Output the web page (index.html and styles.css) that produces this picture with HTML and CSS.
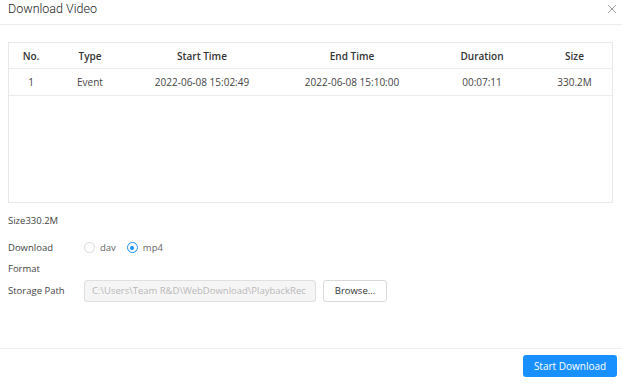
FILE: index.html
```html
<!DOCTYPE html>
<html>
<head>
<meta charset="utf-8">
<link rel="stylesheet" href="styles.css">
</head>
<body>
<div class="dialog">
  <div class="header">
    <span class="title">Download Video</span>
    <svg class="close" width="10" height="10" viewBox="0 0 10 10"><path d="M1 1L9 9M9 1L1 9" stroke="#a0a0a0" stroke-width="1" fill="none"/></svg>
  </div>
  <div class="body">
    <div class="table">
      <div class="row head">
        <div>No.</div><div>Type</div><div>Start Time</div><div>End Time</div><div>Duration</div><div>Size</div>
      </div>
      <div class="row data">
        <div>1</div><div>Event</div><div>2022-06-08 15:02:49</div><div>2022-06-08 15:10:00</div><div>00:07:11</div><div>330.2M</div>
      </div>
    </div>
    <div class="size">Size330.2M</div>
    <div class="form">
      <div class="label">Download Format</div>
      <div class="radios">
        <label class="radio"><span class="dot"></span>dav</label>
        <label class="radio on"><span class="dot"></span>mp4</label>
      </div>
      <div class="label single">Storage Path</div>
      <div class="pathrow">
        <div class="input">C:\Users\Team R&amp;D\WebDownload\PlaybackRec</div>
        <div class="btn">Browse...</div>
      </div>
    </div>
  </div>
  <div class="footer">
    <div class="primary">Start Download</div>
  </div>
</div>
</body>
</html>
```
FILE: styles.css
```css
html, body { margin: 0; padding: 0; background: #fff; }
body { font-family: "Open Sans", "Noto Sans", sans-serif; color: #333; }
.dialog { width: 622px; height: 390px; display: flex; flex-direction: column; }
.header { height: 25px; border-bottom: 1px solid #ececec; display: flex; justify-content: space-between; align-items: flex-start; padding: 0 8px; box-sizing: border-box; }
.title { font-family: Roboto, sans-serif; font-weight: 300; font-size: 12.5px; color: #222; line-height: 17px; }
.close { margin-top: 4px; margin-right: -3px; }
.body { padding: 17px 9px 0 8px; flex: 1; }
.table { border: 1px solid #e8e8e8; height: 159px; font-size: 10px; }
.row { display: grid; grid-template-columns: 44px 74px 150px 150px 110px 1fr; text-align: center; border-bottom: 1px solid #ececec; align-items: center; }
.row.head { height: 25px; font-weight: 600; color: #333; }
.row.data { height: 26px; color: #444; }
.size { font-size: 9.5px; color: #444; margin-top: 12px; line-height: 12px; }
.form { display: grid; grid-template-columns: 76px 1fr; margin-top: 10px; font-size: 9.5px; color: #444; }
.label { width: 56px; line-height: 21px; }
.label.single { width: 76px; line-height: 22px; margin-top: 1px; }
.radios { display: flex; gap: 11px; height: 21px; align-items: center; align-self: start; }
.radio { display: flex; align-items: center; gap: 5px; color: #666; }
.dot { width: 11px; height: 11px; border: 1px solid #d9d9d9; border-radius: 50%; box-sizing: border-box; display: inline-block; position: relative; }
.radio.on .dot { border-color: #1890ff; }
.radio.on .dot::after { content: ""; position: absolute; left: 2.5px; top: 2.5px; width: 4px; height: 4px; border-radius: 50%; background: #1890ff; }
.pathrow { display: flex; gap: 7px; align-items: center; margin-top: 1px; }
.input { width: 232px; height: 22px; box-sizing: border-box; border: 1px solid #e0e0e0; border-radius: 3px; background: #f5f5f5; color: #b8b8b8; padding-left: 7px; line-height: 20px; white-space: nowrap; overflow: hidden; }
.btn { width: 64px; height: 22px; box-sizing: border-box; border: 1px solid #d9d9d9; border-radius: 3px; text-align: center; line-height: 20px; color: #333; }
.footer { border-top: 1px solid #efefef; height: 42px; display: flex; justify-content: flex-end; align-items: flex-start; padding: 6px 5px 0 0; box-sizing: border-box; }
.primary { width: 94px; height: 22px; background: #1890ff; color: #fff; border-radius: 3px; text-align: center; line-height: 22px; font-size: 10px; }
```
